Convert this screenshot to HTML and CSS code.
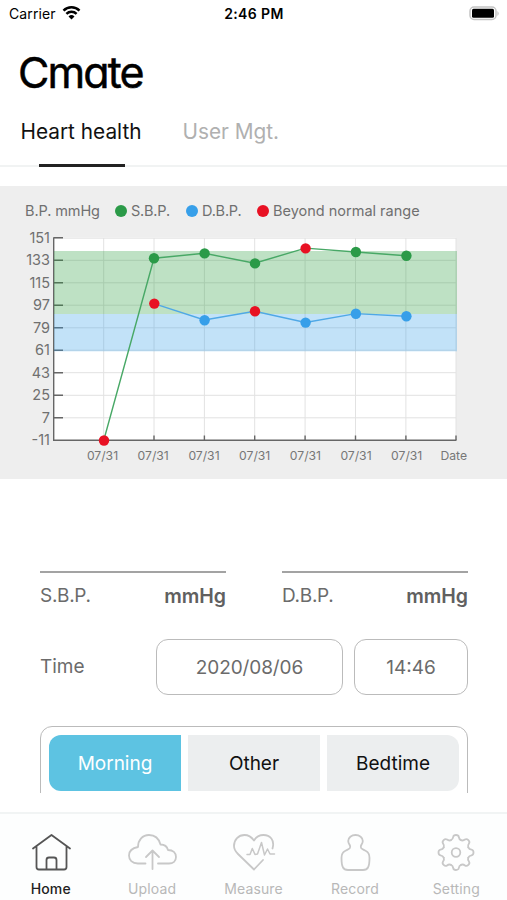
FILE: index.html
```html
<!DOCTYPE html>
<html lang="en">
<head>
  <meta charset="UTF-8">
  <title>Cmate - Heart health</title>
  <meta name="viewport" content="width=device-width, initial-scale=1.0">
  <link rel="stylesheet" href="styles.css">
</head>
<body>
  <div class="app">
    <!-- Status bar -->
    <div class="status-bar">
      <div class="carrier">
        <span>Carrier</span>
        <svg width="19" height="15" viewBox="0 0 19 15">
          <path d="M1.5 4.6a11.4 11.4 0 0 1 16 0M4.4 7.8a7.3 7.3 0 0 1 10.2 0" fill="none" stroke="#000" stroke-width="2.5"/>
          <path d="M9.5 13.500l-3-3a4.3 4.3 0 0 1 6 0z"/>
        </svg>
      </div>
      <div class="clock">2:46 PM</div>
      <div class="battery">
        <svg width="31" height="15" viewBox="0 0 31 15">
          <rect x="1" y="1" width="26" height="12.500" rx="4" fill="#fff" stroke="#c4c4c4" stroke-width="1.5"/>
          <rect x="3" y="2.800" width="22" height="9" rx="1.5"/>
          <path d="M28.5 5q2.2 2.5 0 5z" fill="#b5b5b5"/>
        </svg>
      </div>
    </div>
    <div class="logo">Cmate</div>
    <div class="tabs">
      <button class="tab-btn active">Heart health</button>
      <button class="tab-btn">User Mgt.</button>
    </div>
    <!-- Blood pressure chart -->
    <div class="chart">
      <div class="legend">
        <span class="legend-title">B.P. mmHg</span>
        <span class="legend-item sbp">S.B.P.</span>
        <span class="legend-item dbp">D.B.P.</span>
        <span class="legend-item beyond">Beyond normal range</span>
      </div>
      <svg class="plot" width="507" height="251" viewBox="0 228 507 251">
        <rect x="53.5" y="237.5" width="402.5" height="202.5" fill="#fff"/>
        <g class="grid">
          <path d="M54 238.2H456M54 260.3H456M54 282.8H456M54 305.2H456M54 327.8H456M54 350.2H456M54 372.7H456M54 395.3H456M54 417.8H456"/>
          <path d="M103.7 238V440M154 238V440M204.4 238V440M254.7 238V440M305.1 238V440M355.5 238V440M405.9 238V440M456 238V440"/>
        </g>
        <g class="axis">
          <path d="M53.7 237.3V440.3H456.5"/>
          <path d="M54 237.7H63M54 260.2H63M54 282.7H63M54 305.2H63M54 327.7H63M54 350.2H63M54 372.7H63M54 395.3H63M54 417.8H63"/>
          <path d="M154 440V435.5M204.4 440V435.5M254.7 440V435.5M305.1 440V435.5M355.5 440V435.5M405.9 440V435.5M456 440V435.5"/>
        </g>
        <rect class="band-sbp" x="54" y="251" width="403" height="63"/>
        <rect class="band-dbp" x="54" y="314" width="403" height="37.3"/>
        <polyline class="line-sbp" points="103.7,440.5 154,258.2 204.4,253.3 254.7,263.2 305.5,248.1 355.8,252 406.2,255.8"/>
        <polyline class="line-dbp" points="154,303.6 204.4,320 254.7,311.2 305.5,322.5 355.8,313.6 406.2,316.2"/>
        <g class="dot-sbp">
          <circle cx="154" cy="258.2" r="5.2"/>
          <circle cx="204.6" cy="253.4" r="5.2"/>
          <circle cx="255" cy="263.4" r="5.2"/>
          <circle cx="355.9" cy="252" r="5.2"/>
          <circle cx="406.4" cy="255.8" r="5.2"/>
        </g>
        <g class="dot-dbp">
          <circle cx="204.6" cy="320.2" r="5.2"/>
          <circle cx="305.6" cy="322.6" r="5.2"/>
          <circle cx="355.9" cy="313.7" r="5.2"/>
          <circle cx="406.4" cy="316.2" r="5.2"/>
        </g>
        <g class="dot-beyond">
          <circle cx="104" cy="440.5" r="5.2"/>
          <circle cx="154.3" cy="303.6" r="5.2"/>
          <circle cx="255" cy="311.2" r="5.2"/>
          <circle cx="305.6" cy="248.4" r="5.2"/>
        </g>
        <g class="y-label">
          <text x="50" y="242.9">151</text>
          <text x="50" y="265.4">133</text>
          <text x="50" y="287.9">115</text>
          <text x="50" y="310.4">97</text>
          <text x="50" y="332.9">79</text>
          <text x="50" y="355.4">61</text>
          <text x="50" y="377.9">43</text>
          <text x="50" y="400.4">25</text>
          <text x="50" y="422.9">7</text>
          <text x="50" y="445.4">-11</text>
        </g>
        <g class="x-label">
          <text x="102.500" y="460">07/31</text>
          <text x="153.2" y="460">07/31</text>
          <text x="204" y="460">07/31</text>
          <text x="254.7" y="460">07/31</text>
          <text x="305.4" y="460">07/31</text>
          <text x="356" y="460">07/31</text>
          <text x="406.7" y="460">07/31</text>
          <text x="453.8" y="460">Date</text>
        </g>
      </svg>
    </div>
    <!-- Record form -->
    <div class="record-form">
      <div class="readings">
        <div class="reading"><span>S.B.P.</span><b>mmHg</b></div>
        <div class="reading"><span>D.B.P.</span><b>mmHg</b></div>
      </div>
      <div class="time-row">
        <span class="time-label">Time</span>
        <button class="field date">2020/08/06</button>
        <button class="field hour">14:46</button>
      </div>
      <div class="period">
        <button class="period-btn active">Morning</button>
        <button class="period-btn">Other</button>
        <button class="period-btn">Bedtime</button>
      </div>
    </div>
    <!-- Bottom navigation -->
    <div class="bottom-nav">
      <div class="nav-item active">
        <svg viewBox="0 0 50 42">
          <path d="M7 17.500L25.500 4l18.500 13.500M10.500 15.500V36q0 2.500 2.500 2.500h25q2.500 0 2.500-2.500V15.500M20.500 38.500V29q0-2.500 2.500-2.500h5q2.500 0 2.500 2.500v9.500"/>
        </svg>
        <span>Home</span>
      </div>
      <div class="nav-item">
        <svg viewBox="0 0 50 42">
          <path d="M18.500 32.500H11C5 32.500 2 29 2 24.500 2 19.500 5.500 17 11 16 11 9 15.500 4 22 4c6 0 10 4 11.500 9.500 4 0 6.500 1.500 7.500 5.500 5 0 8 3 8 7 0 4-3 6.500-7 6.500H31M25.500 38V19.500M19 26L25.500 19.500 32 26"/>
        </svg>
        <span>Upload</span>
      </div>
      <div class="nav-item">
        <svg viewBox="0 0 50 42">
          <path d="M43.500 17.500C46 9 41 4 34.500 4 30 4 27 6 25 9.500 22.500 6 19.500 4 15.500 4 9.500 4 5 8.500 5 15c0 3 1.500 5.500 4 8L25 38.500l9-9.500"/>
          <path class="pulse" d="M18 23.500h3l2.300-6 2.700 6 2.500-.5 4-11.500 3 12.500 3-6 2.500 5h4.500"/>
        </svg>
        <span>Measure</span>
      </div>
      <div class="nav-item">
        <svg viewBox="0 0 50 42">
          <path d="M20 14.500C21 18 18.500 18 15 20c-3 1.500-3.500 3.500-3.500 7 0 4 0 7 1.500 9.500 1 2 3 2.500 5 2.500h15c2 0 4-.5 5-2.500 1.500-2.500 1.500-5.500 1.500-9.500 0-3.500-.5-5.500-3.500-7-3.500-2-6-2-5-5.500 1-1.500 1.800-2.500 1.800-4.500C32.800 6.500 29.500 4 25.500 4S18.200 6.500 18.200 10c0 2 .8 3 1.800 4.500z"/>
        </svg>
        <span>Record</span>
      </div>
      <div class="nav-item">
        <svg viewBox="-25 -21.500 50 42">
          <defs>
            <path id="tooth" d="M-5.100-12.300C-3.500-13-3-14-2.800-15.500Q-2.500-17.500 0-17.500T2.800-15.500C3-14 3.500-13 5.100-12.300"/>
          </defs>
          <use href="#tooth"/>
          <use href="#tooth" transform="rotate(45)"/>
          <use href="#tooth" transform="rotate(90)"/>
          <use href="#tooth" transform="rotate(135)"/>
          <use href="#tooth" transform="rotate(180)"/>
          <use href="#tooth" transform="rotate(225)"/>
          <use href="#tooth" transform="rotate(270)"/>
          <use href="#tooth" transform="rotate(315)"/>
          <circle r="4.300"/>
        </svg>
        <span>Setting</span>
      </div>
    </div>
  </div>
</body>
</html>
```
FILE: styles.css
```css
* {
  box-sizing: border-box;
}
body {
  margin: 0;
  background: #fff;
  font-family: Inter, "Liberation Sans", sans-serif;
  color: #000;
}
button {
  font-family: inherit;
  background: none;
  border: none;
  padding: 0;
}
.app {
  width: 507px;
  height: 900px;
  display: flex;
  flex-direction: column;
  overflow: hidden;
}
/* Status bar */
.status-bar {
  display: grid;
  grid-template-columns: 1fr auto 1fr;
  align-items: center;
  height: 27px;
  padding: 0 7px 0 9px;
  font-size: 14px;
}
.carrier {
  display: flex;
  align-items: center;
  gap: 6px;
  letter-spacing: 0.1px;
}
.clock {
  font-weight: 600;
  letter-spacing: 0.4px;
  margin-right: 1px;
}
.battery {
  display: flex;
  justify-content: flex-end;
}
.logo {
  height: 90px;
  padding: 25px 0 0 18px;
  font-size: 43px;
  line-height: 40px;
  font-weight: 400;
  font-feature-settings: "cv11", "ss03";
  letter-spacing: -1.9px;
  -webkit-text-stroke: 0.5px #000;
}
.tabs {
  display: flex;
  gap: 41px;
  height: 50px;
  padding-left: 20.500px;
  border-bottom: 2px solid #f1f3f3;
}
.tab-btn {
  position: relative;
  height: 50px;
  padding-bottom: 21px;
  font-size: 20.800px;
  color: #b0b0b0;
}
.tab-btn.active {
  color: #111;
}
.tab-btn.active::after {
  content: "";
  position: absolute;
  left: 18px;
  bottom: 0;
  width: 86px;
  height: 3px;
  background: #222;
}
/* Chart */
.chart {
  height: 293px;
  margin-top: 19px;
  background: #eee;
}
.legend {
  display: flex;
  align-items: center;
  height: 42px;
  padding: 7px 0 0 25px;
  font-size: 14.500px;
  color: #707070;
}
.legend-title {
  width: 90px;
  letter-spacing: -0.1px;
}
.legend-item {
  display: flex;
  align-items: center;
  gap: 4px;
}
.legend-item::before {
  content: "";
  width: 12px;
  height: 12px;
  border-radius: 50%;
}
.legend-item.sbp, .legend-item.dbp {
  width: 71px;
  letter-spacing: -0.2px;
}
.sbp::before {
  background: #2b9a48;
}
.dbp::before {
  background: #379fe9;
}
.beyond::before {
  background: #e81123;
}
.plot {
  display: block;
}
.grid {
  fill: none;
  stroke: #e2e2e2;
}
.axis {
  fill: none;
  stroke: #666;
  stroke-width: 1.4;
}
.band-sbp {
  fill: #289b3c;
  fill-opacity: 0.3;
}
.band-dbp {
  fill: #36a0e8;
  fill-opacity: 0.3;
}
.line-sbp, .line-dbp {
  fill: none;
  stroke: #48a866;
  stroke-width: 1.4;
}
.line-dbp {
  stroke: #4fa8e6;
}
.dot-sbp {
  fill: #2b9a48;
}
.dot-dbp {
  fill: #379fe9;
}
.dot-beyond {
  fill: #e81123;
}
.y-label {
  font-size: 14.500px;
  fill: #707070;
  text-anchor: end;
}
.x-label {
  font-size: 12.200px;
  fill: #777;
  text-anchor: middle;
}
/* Form */
.record-form {
  height: 314px;
  padding: 92px 39px 0 40px;
  overflow: hidden;
  color: #6b6b6b;
  font-size: 19px;
}
.readings {
  display: flex;
  justify-content: space-between;
}
.reading {
  display: flex;
  justify-content: space-between;
  width: 186px;
  height: 67px;
  padding-top: 11px;
  border-top: 2px solid #a3a3a3;
}
.reading span {
  letter-spacing: -0.3px;
}
.reading b {
  font-size: 19.500px;
  font-weight: 600;
  color: #606060;
}
.time-row {
  display: flex;
  align-items: center;
  height: 57px;
}
.time-label {
  flex: 1;
}
.field {
  height: 56px;
  padding-top: 1px;
  border: 1.500px solid #bbb;
  border-radius: 12px;
  font-size: 19px;
  color: #6b6b6b;
}
.field.date {
  width: 187px;
  letter-spacing: -0.1px;
}
.field.hour {
  width: 114px;
  margin-left: 11px;
}
.period {
  display: flex;
  gap: 7px;
  height: 90px;
  margin-top: 31px;
  padding: 8px;
  border: 1.500px solid #bbb;
  border-radius: 12px;
}
.period-btn {
  flex: 1;
  height: 56px;
  background: #eceeef;
  font-size: 19px;
  color: #111;
}
.period-btn.active {
  background: #5dc3e2;
  color: #fff;
}
.period-btn:first-child {
  border-radius: 12px 0 0 12px;
}
.period-btn:last-child {
  border-radius: 0 12px 12px 0;
}
/* Bottom navigation */
.bottom-nav {
  display: flex;
  height: 88px;
  margin-top: 19px;
  border-top: 2px solid #f1f4f4;
  background: #fdfefe;
}
.nav-item {
  flex: 1;
  display: flex;
  flex-direction: column;
  align-items: center;
  padding-top: 17px;
  font-size: 14px;
  letter-spacing: 0.15px;
  color: #b8b8b8;
}
.nav-item svg {
  width: 50px;
  height: 42px;
  margin-bottom: 7px;
  fill: none;
  stroke: #c8c8c8;
  stroke-width: 1.800;
  stroke-linecap: round;
  stroke-linejoin: round;
}
.nav-item .pulse {
  stroke-width: 1.500;
}
.nav-item.active {
  color: #222;
  font-weight: 500;
}
.nav-item.active svg {
  stroke: #555;
}
```
